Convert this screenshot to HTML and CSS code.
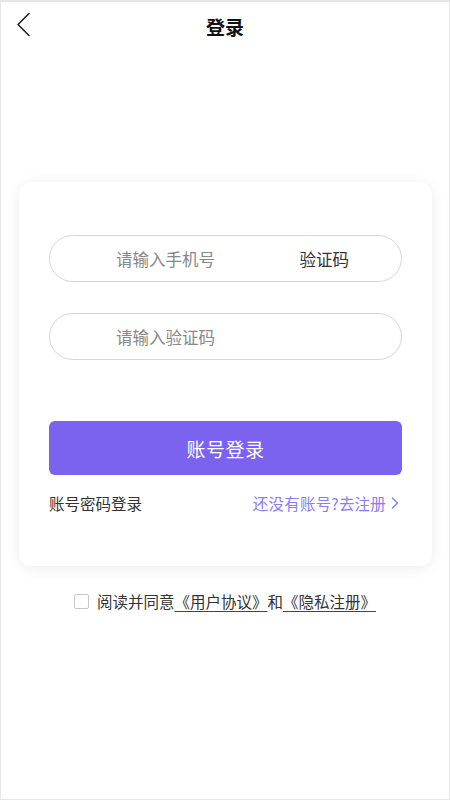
FILE: index.html
```html
<!DOCTYPE html>
<html lang="zh">
<head>
<meta charset="utf-8">
<title>登录</title>
<link rel="stylesheet" href="styles.css">
</head>
<body>
<div class="page">
  <header class="topbar">
    <span class="back">
      <svg width="16" height="26" viewBox="0 0 16 26"><path d="M13 1.5 L2 12.5 L13 23.5" fill="none" stroke="#222" stroke-width="1.6" stroke-linecap="round" stroke-linejoin="round"/></svg>
    </span>
    <h1 class="title">登录</h1>
  </header>
  <main class="main">
    <section class="card">
      <div class="field">
        <span class="placeholder">请输入手机号</span>
        <span class="code-btn">验证码</span>
      </div>
      <div class="field field-second">
        <span class="placeholder">请输入验证码</span>
      </div>
      <button class="login-btn">账号登录</button>
      <div class="links">
        <span class="pwd-login">账号密码登录</span>
        <span class="register">还没有账号?去注册
          <svg class="chev" width="8" height="12" viewBox="0 0 8 12"><path d="M1.5 1 L6.5 6 L1.5 11" fill="none" stroke="#8b7cf0" stroke-width="1.4" stroke-linecap="round" stroke-linejoin="round"/></svg>
        </span>
      </div>
    </section>
    <div class="agree">
      <span class="checkbox"></span>
      <span class="agree-text">阅读并同意<u>《用户协议》</u>和<u>《隐私注册》</u></span>
    </div>
  </main>
</div>
</body>
</html>
```

FILE: styles.css
```css
* { box-sizing: border-box; }
html, body { margin: 0; padding: 0; background: #fff; }
body {
  font-family: "Noto Sans CJK SC", "Noto Sans", sans-serif;
  color: #333;
}
.page {
  width: 450px;
  height: 800px;
  border: 1px solid #e6e6e6;
  border-top-width: 2px;
  background: #fff;
  overflow: hidden;
}
.topbar {
  position: relative;
  height: 52px;
  display: flex;
  align-items: center;
  justify-content: center;
}
.back {
  position: absolute;
  left: 15px;
  top: 10px;
  display: block;
  line-height: 0;
}
.title {
  margin: 0;
  font-size: 19px;
  font-weight: 700;
  color: #111;
  line-height: 26px;
  margin-top: -2px;
}
.main {
  padding-top: 128px;
}
.card {
  margin: 0 17px 0 18px;
  background: #fff;
  border-radius: 12px;
  box-shadow: 0 2px 14px rgba(0,0,0,0.08);
  padding: 53px 30px 53px 30px;
}
.field {
  height: 47px;
  border: 1px solid #d6d6d6;
  border-radius: 24px;
  display: flex;
  align-items: center;
  justify-content: space-between;
  padding: 0 52px 0 66px;
  font-size: 16.5px;
}
.field-second { margin-top: 31px; }
.placeholder { color: #888; }
.code-btn { color: #333; }
.login-btn {
  display: block;
  width: 100%;
  margin-top: 61px;
  height: 54px;
  border: 0;
  border-radius: 6px;
  background: #7b62ef;
  color: #fff;
  font-family: inherit;
  font-size: 19px;
  letter-spacing: 0.5px;
}
.links {
  margin-top: 18px;
  height: 20px;
  display: flex;
  align-items: center;
  justify-content: space-between;
  font-size: 15.5px;
  line-height: 20px;
}
.pwd-login { color: #333; }
.register {
  color: #8b7cf0;
  display: flex;
  align-items: center;
  gap: 5px;
  margin-right: 3px;
  letter-spacing: 0.2px;
}
.chev { display: block; }
.agree {
  margin-top: 25px;
  display: flex;
  align-items: center;
  justify-content: center;
  gap: 8px;
  font-size: 15.5px;
  line-height: 20px;
  color: #333;
}
.checkbox {
  width: 15px;
  height: 15px;
  border: 1px solid #c8c8c8;
  border-radius: 2px;
  background: #fff;
}
.agree-text u {
  text-decoration-color: #444;
  text-underline-offset: 3px;
}
```
